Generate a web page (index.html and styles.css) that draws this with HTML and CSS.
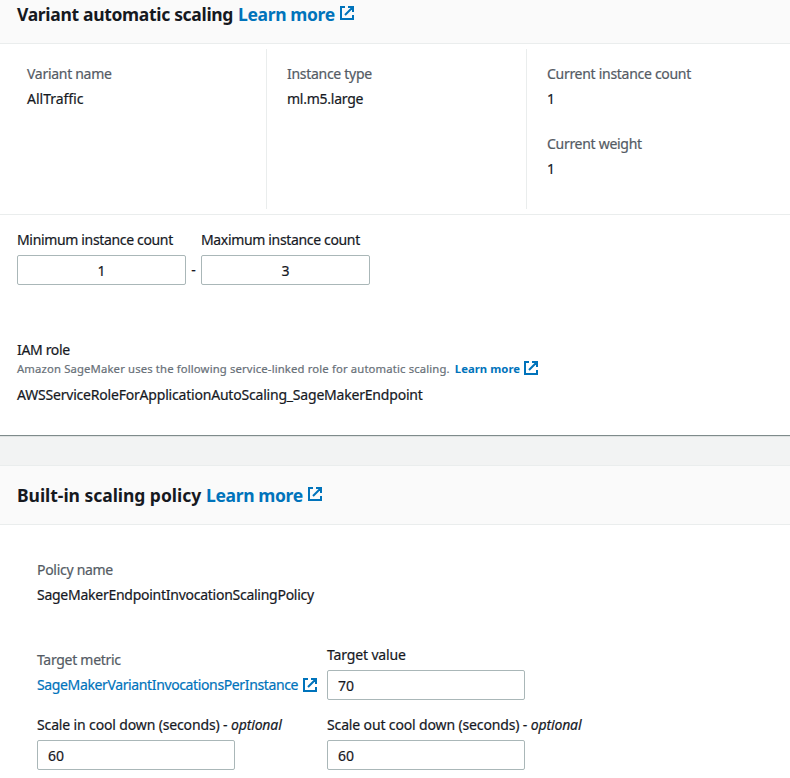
FILE: index.html
```html
<!DOCTYPE html>
<html lang="en">
<head>
<meta charset="utf-8">
<title>Variant automatic scaling</title>
<link rel="stylesheet" href="styles.css">
</head>
<body>
<svg class="sprite" aria-hidden="true">
  <symbol id="external" viewBox="0 0 14 14">
    <path d="M5 1H1v12h12V9M8 1h5v5M13 1L5 9" fill="none" stroke="currentColor" stroke-width="2"/>
  </symbol>
</svg>
<section class="panel panel-first">
  <header class="panel-header header-cut">
    <h2 class="title">Variant automatic scaling</h2>
    <a class="title title-link">Learn more</a>
    <svg class="icon icon-title"><use href="#external"/></svg>
  </header>
  <div class="columns">
    <div class="column">
      <div class="label">Variant name</div>
      <div class="value">AllTraffic</div>
    </div>
    <div class="column">
      <div class="label">Instance type</div>
      <div class="value instance">ml.m5.large</div>
    </div>
    <div class="column">
      <div class="label">Current instance count</div>
      <div class="value">1</div>
      <div class="label spaced">Current weight</div>
      <div class="value">1</div>
    </div>
  </div>
  <div class="scaling-form">
    <div class="range">
      <label class="field">Minimum instance count<input class="input count" value="1"></label>
      <span class="dash">-</span>
      <label class="field">Maximum instance count<input class="input count" value="3"></label>
    </div>
    <div class="role">
      <div class="field">IAM role</div>
      <div class="hint"><span>Amazon SageMaker uses the following service-linked role for automatic scaling.</span><a class="hint-link">Learn more</a><svg class="icon icon-hint"><use href="#external"/></svg></div>
      <div class="value role-name">AWSServiceRoleForApplicationAutoScaling_SageMakerEndpoint</div>
    </div>
  </div>
</section>
<section class="panel panel-policy">
  <header class="panel-header">
    <h2 class="title title-policy">Built-in scaling policy</h2>
    <a class="title title-link">Learn more</a>
    <svg class="icon icon-title"><use href="#external"/></svg>
  </header>
  <div class="policy">
    <div class="label">Policy name</div>
    <div class="value policy-name">SageMakerEndpointInvocationScalingPolicy</div>
    <div class="policy-grid">
      <div class="metric">
        <div class="label">Target metric</div>
        <div class="value metric-link"><a>SageMakerVariantInvocationsPerInstance</a><svg class="icon"><use href="#external"/></svg></div>
      </div>
      <label class="field"><span class="cooldown">Target value</span><input class="input" value="70"></label>
      <label class="field"><span class="cooldown">Scale in cool down (seconds) - <em>optional</em></span><input class="input" value="60"></label>
      <label class="field"><span class="cooldown">Scale out cool down (seconds) - <em>optional</em></span><input class="input" value="60"></label>
    </div>
  </div>
</section>
</body>
</html>
```
FILE: styles.css
```css
* { box-sizing: border-box; }
body {
  margin: 0;
  height: 778px;
  overflow: hidden;
  background: #f2f3f3;
  color: #16191f;
  font: 14px/20px "Noto Sans", "Open Sans", sans-serif;
  white-space: nowrap;
  -webkit-text-stroke: 0.2px;
}
.sprite { display: none; }
.panel { background: #fff; }
.panel-first { height: 436px; border-bottom: 1px solid #7f8b8b; box-shadow: 0 1px 0 #dfe2e2; }
.panel-policy { margin-top: 29px; height: 313px; border-top: 1px solid #eaeded; }
.panel-header {
  display: flex;
  align-items: center;
  height: 59px;
  padding: 0 17px 1px;
  background: #fafafa;
  border-bottom: 1px solid #eaeded;
}
.header-cut { height: 44px; padding: 0 17px 16px; }
.title { margin: 0; font-size: 17.5px; line-height: 22px; font-weight: 700; letter-spacing: -0.32px; -webkit-text-stroke: 0; }
.title-policy { letter-spacing: -0.04px; }
.title-link { margin-left: 5px; color: #0073bb; letter-spacing: -0.37px; }
.icon { width: 14px; height: 14px; flex: none; color: #0073bb; }
.icon-title { margin: 0 0 1px 5px; }
.columns {
  display: grid;
  grid-template-columns: 267px 260px 1fr;
  padding: 5px 0;
  height: 171px;
  border-bottom: 1px solid #eaeded;
}
.column { padding: 15px 20px 0; border-right: 1px solid #eaeded; }
.column:first-child { padding-left: 27px; }
.column:last-child { border-right: 0; }
.label { color: #545b64; letter-spacing: -0.29px; }
.value { margin-top: 5px; }
.instance { letter-spacing: -0.25px; }
.spaced { margin-top: 25px; }
.scaling-form { padding: 15px 17px; }
.range { display: flex; align-items: flex-end; }
.field { display: block; letter-spacing: -0.34px; }
.cooldown { letter-spacing: -0.14px; }
.input {
  display: block;
  width: 198px;
  height: 30px;
  margin: 5px 0 0;
  padding: 0 10px;
  border: 1px solid #aab7b8;
  border-radius: 2px;
  background: #fff;
  color: #16191f;
  font: inherit;
  outline: 0;
}
.count { width: 169px; text-align: center; }
.dash { width: 15px; line-height: 30px; text-align: center; }
.role { margin-top: 55px; }
.hint { display: flex; align-items: center; height: 18px; font-size: 11.3px; line-height: 18px; letter-spacing: 0.14px; color: #687078; }
.hint-link { margin: 0 4px 0 5px; font-weight: 700; letter-spacing: 0.06px; color: #0073bb; -webkit-text-stroke: 0; }
.icon-hint { margin-bottom: 2px; }
.role-name { margin-top: 7px; letter-spacing: -0.2px; }
.policy { padding: 35px 37px 0; }
.policy-name { letter-spacing: -0.26px; }
.policy-grid { display: grid; grid-template-columns: 290px 290px; row-gap: 15px; margin-top: 40px; }
.metric { padding-top: 5px; }
.metric-link { display: flex; align-items: center; gap: 5px; color: #0073bb; letter-spacing: -0.37px; }
```
